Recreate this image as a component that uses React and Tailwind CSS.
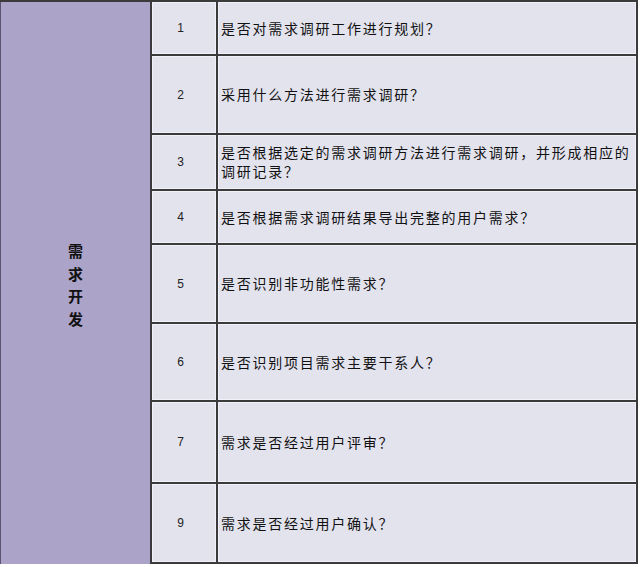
const rows = [
  { no: '1', h: 'h-[54px]', text: ['是否对需求调研工作进行规划？'] },
  { no: '2', h: 'h-[79px]', text: ['采用什么方法进行需求调研？'] },
  { no: '3', h: 'h-[56px]', text: ['是否根据选定的需求调研方法进行需求调研，并形成相应的', '调研记录？'] },
  { no: '4', h: 'h-[54px]', text: ['是否根据需求调研结果导出完整的用户需求？'] },
  { no: '5', h: 'h-[79px]', text: ['是否识别非功能性需求？'] },
  { no: '6', h: 'h-[78px]', text: ['是否识别项目需求主要干系人？'] },
  { no: '7', h: 'h-[82px]', text: ['需求是否经过用户评审？'] },
  { no: '9', h: 'h-[80px]', text: ['需求是否经过用户确认？'] },
];

export default function App() {
  return (
    <div className="w-[640px] h-[567px] bg-white font-['Noto_Sans_CJK_SC',sans-serif] text-[#111]">
      <div className="flex w-[638px] border-t-2 border-[#3b3b3b]">
        {/* 左侧分类 */}
        <div className="w-[150px] shrink-0 border-l border-[#5a5470] bg-[#aca3c9] flex items-center justify-center">
          <div className="flex flex-col items-center text-[15px] leading-[22.5px] font-bold pt-[4px]">
            <span>需</span>
            <span>求</span>
            <span>开</span>
            <span>发</span>
          </div>
        </div>

        {/* 检查项 */}
        <div className="flex-1 border-l-2 border-r-2 border-[#3b3b3b]">
          {rows.map(r => (
            <div key={r.no} className={`flex ${r.h} border-b-2 border-[#3b3b3b] bg-[#e3e3ee]`}>
              <div className="w-[66px] shrink-0 flex items-center justify-center pr-[7px] border-r-2 border-[#3b3b3b] shadow-[inset_0_0_0_1px_#f1f1f7] font-['Liberation_Sans',sans-serif] text-[12px] text-[#222]">
                {r.no}
              </div>
              <div className="flex-1 flex flex-col justify-center pl-[3px] shadow-[inset_0_0_0_1px_#f1f1f7] text-[14px] leading-[19px] tracking-[1.75px]">
                {r.text.map((t, i) => <div key={i}>{t}</div>)}
              </div>
            </div>
          ))}
        </div>
      </div>
    </div>
  );
}
